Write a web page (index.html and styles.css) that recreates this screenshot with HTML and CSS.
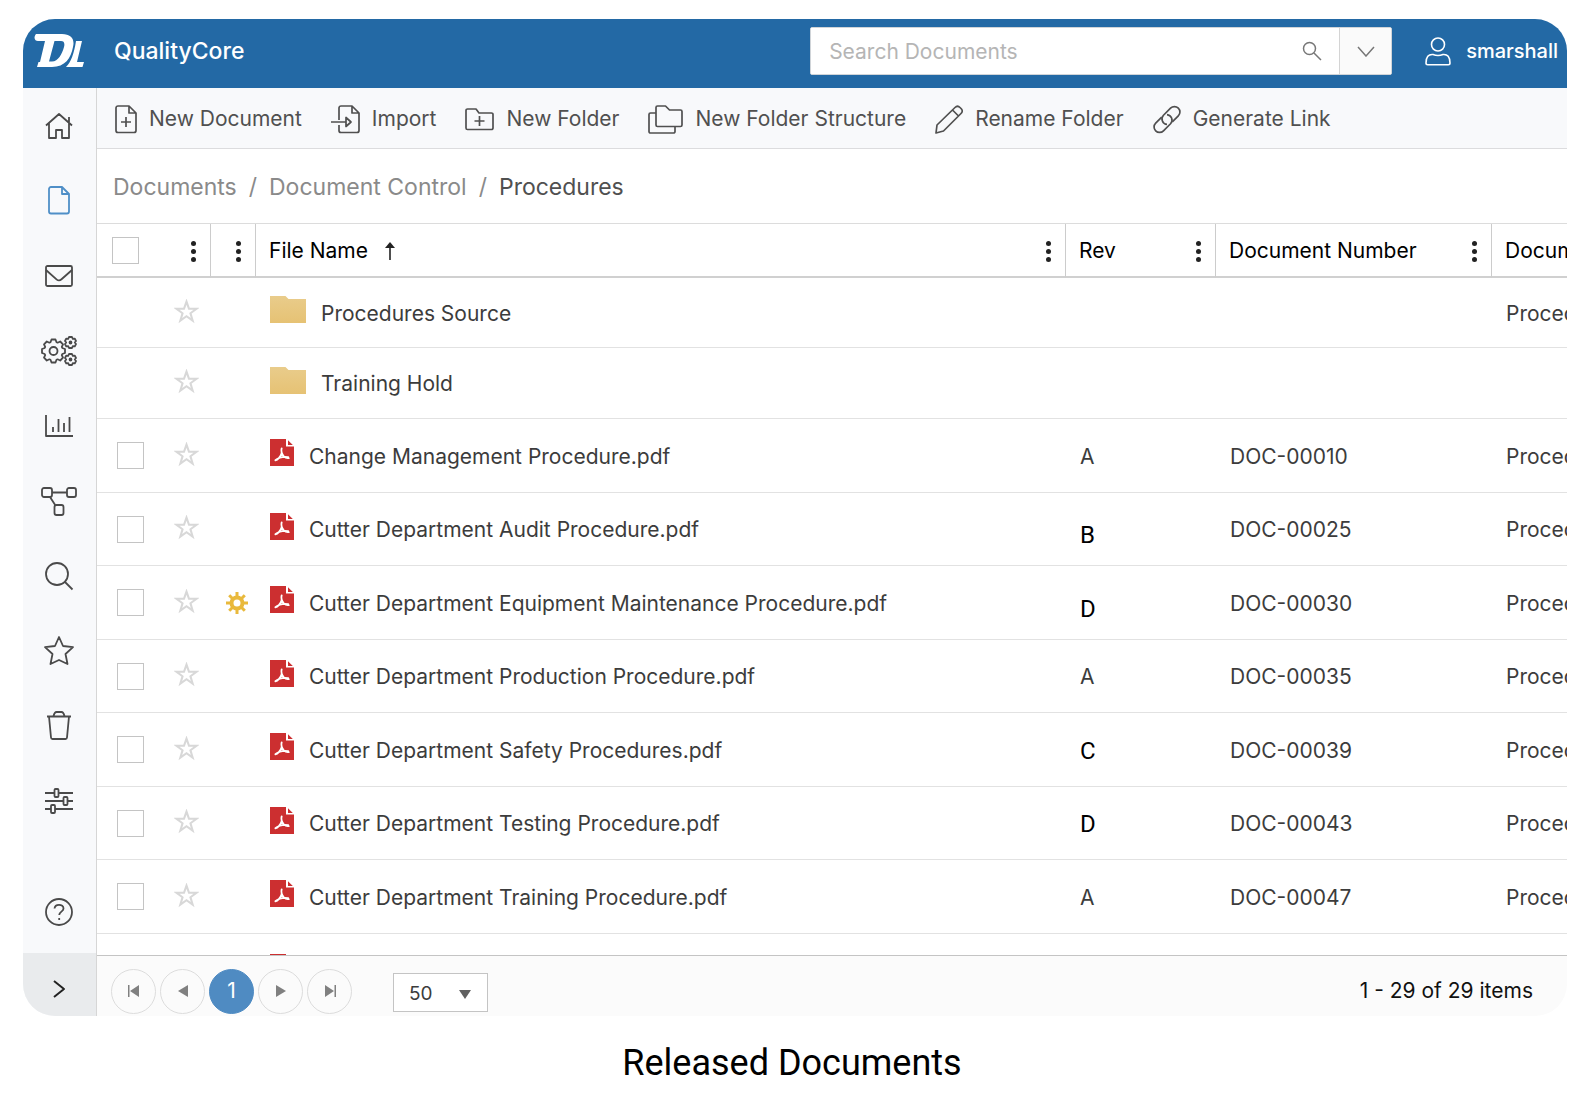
FILE: index.html
```html
<!DOCTYPE html>
<html lang="en">
<head>
    <meta charset="UTF-8">
    <meta name="viewport" content="width=device-width, initial-scale=1.0">
    <title>QualityCore</title>
    <link rel="stylesheet" href="styles.css">
</head>
<body>
    <!-- Shared symbols -->
    <svg width="0" height="0" class="sprite" aria-hidden="true">
        <defs>
            <linearGradient id="folderFill" x1="0" y1="0" x2="0" y2="1">
                <stop offset="0" stop-color="#e9cc8b"/>
                <stop offset="1" stop-color="#e6c274"/>
            </linearGradient>
        </defs>
        <symbol id="star" viewBox="0 0 24 24">
            <path d="M12 2.500l2.400 6.900h7.100l-5.700 4.300 2.100 7L12 16.500l-5.900 4.200 2.100-7L2.500 9.400h7.100z" fill="none" stroke="#d8d8d8" stroke-width="2"/>
        </symbol>
        <symbol id="folder" viewBox="0 0 36 27">
            <path d="M0 0h15.500l3 3H36v24H0z" fill="url(#folderFill)"/>
        </symbol>
        <symbol id="pdf" viewBox="0 0 24 27">
            <path d="M0 0h16v7.500h8V27H0z" fill="#cc2f30"/>
            <path d="M18 1.200v4.800h4.800z" fill="#cc2f30"/>
            <path d="M11.700 9.300c-.9 3 .3 6 2.300 8.200 1.300 1.400 3.300 1.900 4.800 1.600M5.400 21.300c2.300-.2 5.300-3.500 6.400-7.600M5.400 21.300c3.600-3 8.400-3.900 12.800-3.200" fill="none" stroke="#fff" stroke-width="1.800" stroke-linecap="round"/>
        </symbol>
    </svg>

    <main class="card">
        <header class="topbar">
            <svg class="logo" width="50" height="34" viewBox="0 0 50 34" aria-label="DL">
                <path fill="#fff" fill-rule="evenodd" d="M2 0H28C37 0 41 5 39 13C37 24 31 33 18 33H3L4.500 28H6L11 7H4C1 7-1 4 2 0zM20.500 7L15 27.500H18C24 27.500 28 20 30 13C31 9 30 7 27 7z"/>
                <path fill="#fff" d="M42 7H48L43 28H50L48.500 33H32C37 28 40 20 42 7z"/>
            </svg>
            <h1 class="product">QualityCore</h1>
            <form class="search">
                <input type="text" placeholder="Search Documents" aria-label="Search Documents">
                <button type="button" class="search-go" aria-label="Search">
                    <svg width="20" height="20" viewBox="0 0 20 20"><circle cx="7.500" cy="7.500" r="6"/><path d="M12 12l7 7"/></svg>
                </button>
                <button type="button" class="search-more" aria-label="Search options">
                    <svg width="18" height="11" viewBox="0 0 18 11"><path d="M1 1l8 9 8-9"/></svg>
                </button>
            </form>
            <a href="#" class="user">
                <svg width="26" height="29" viewBox="0 0 26 29"><circle cx="13" cy="7.500" r="6.500"/><path d="M1 26c0-6 2.500-9 7-8.500 3 1.200 7 1.200 10 0 4.500-.5 7 2.500 7 8.500 0 1-.7 1.700-1.700 1.700H2.700C1.700 27.700 1 27 1 26z"/></svg>
                <span>smarshall</span>
            </a>
        </header>

        <div class="body">
            <nav class="sidebar">
                <a href="#" aria-label="Home"><svg width="28" height="26" viewBox="0 0 28 26"><path d="M1 12.500L14 1l13 11.500M4 10.500V25h7v-8h6v8h7V10.500M24 9V4"/></svg></a>
                <a href="#" class="active" aria-label="Documents"><svg width="22" height="29" viewBox="0 0 22 29"><path d="M14 1H3a2 2 0 0 0-2 2v22.500a2 2 0 0 0 2 2h16a2 2 0 0 0 2-2V8zV8h7"/></svg></a>
                <a href="#" aria-label="Mail"><svg width="28" height="22" viewBox="0 0 28 22"><rect x="1" y="1" width="26" height="20" rx="1.500"/><path d="M1 5l10.500 9.300q2.500 2.200 5 0L27 5"/></svg></a>
                <a href="#" aria-label="Workflows"><svg width="36" height="30" viewBox="0 0 36 30">
                    <path transform="translate(12.500 15)" d="M-3-8.800L-2-11.500H2L3-8.800 4.100-8.300 6.700-9.500 9.500-6.700 8.300-4.100 8.800-3 11.500-2V2L8.800 3 8.300 4.100 9.500 6.700 6.700 9.500 4.100 8.300 3 8.800 2 11.500H-2L-3 8.800-4.100 8.300-6.700 9.500-9.500 6.700-8.300 4.100-8.800 3-11.500 2V-2L-8.800-3-8.300-4.100-9.500-6.700-6.700-9.500-4.100-8.300z"/>
                    <circle cx="12.500" cy="15" r="4"/>
                    <path d="M28 1h3l.8 1.800 2-.2L35 5l-1.200 1.500L35 8l-1.200 2.400-2-.2L31 12h-3l-.8-1.800-2 .2L24 8l1.200-1.500L24 5l1.200-2.400 2 .2z"/><circle cx="29.500" cy="6.500" r="1"/>
                    <path d="M28 18h3l.8 1.800 2-.2L35 22l-1.200 1.500L35 25l-1.200 2.400-2-.2L31 29h-3l-.8-1.800-2 .2L24 25l1.200-1.500L24 22l1.200-2.400 2 .2z"/><circle cx="29.500" cy="23.500" r="1"/>
                </svg></a>
                <a href="#" aria-label="Reports"><svg width="28" height="22" viewBox="0 0 28 22"><path d="M1 0v21h27M8 17v-5M13.500 17V4M19 17V8M24.500 17V2"/></svg></a>
                <a href="#" aria-label="Processes"><svg width="36" height="30" viewBox="0 0 36 30"><rect x="1" y="2" width="10" height="9" rx="2"/><rect x="26" y="2" width="9" height="9" rx="2"/><rect x="13.500" y="19" width="9" height="10" rx="2"/><path d="M11 6.500h15M9 11l5.500 8.500"/></svg></a>
                <a href="#" aria-label="Search"><svg width="28" height="28" viewBox="0 0 28 28"><circle cx="12" cy="12" r="11"/><path d="M19.500 19.500l8 8"/></svg></a>
                <a href="#" aria-label="Favorites"><svg width="30" height="29" viewBox="0 0 30 29"><path d="M15 1l4 9 10 1.200-7.500 6.800 2 10L15 24l-8.500 4 2-10L1 11.200 11 10z"/></svg></a>
                <a href="#" aria-label="Trash"><svg width="26" height="29" viewBox="0 0 26 29"><path d="M1 5.500h24M3 5.500l2 21q.1 1.500 1.500 1.500h13q1.400 0 1.500-1.500l2-21M7.500 5q1-4 3-4h5q2 0 3 4"/></svg></a>
                <a href="#" aria-label="Settings"><svg width="28" height="26" viewBox="0 0 28 26"><path d="M0 5h9.500M13.500 5H28M0 13h18.500M22.500 13H28M0 21h6M10 21h18"/><rect x="9.500" y="1" width="4" height="8" rx="1"/><rect x="18.500" y="9" width="4" height="8" rx="1"/><rect x="6" y="17" width="4" height="8" rx="1"/></svg></a>
                <a href="#" class="help" aria-label="Help"><svg width="28" height="28" viewBox="0 0 28 28"><circle cx="14" cy="14" r="13"/><path d="M9.500 10.500c.3-2.500 2-3.700 4.500-3.700s4.500 1.500 4.500 3.700c0 3-4.300 3.300-4.300 6.500M14.200 20v2"/></svg></a>
                <button type="button" class="expand" aria-label="Expand"><svg width="12" height="18" viewBox="0 0 12 18"><path d="M1 1l10 8L1 17"/></svg></button>
            </nav>

            <section class="content">
                <div class="toolbar">
                    <button type="button"><svg width="22" height="29" viewBox="0 0 22 29"><path d="M14 1H3a2 2 0 0 0-2 2v22.500a2 2 0 0 0 2 2h16a2 2 0 0 0 2-2V8zV8h7M11 12v10M6 17h10"/></svg>New Document</button>
                    <button type="button"><svg width="29" height="29" viewBox="0 0 29 29"><path d="M8 15V3a2 2 0 0 1 2-2h11l7 7v17.500a2 2 0 0 1-2 2H10a2 2 0 0 1-2-2V20M21 1v7h7M0 17h15M15 12.500v9l5-4.500z"/></svg>Import</button>
                    <button type="button"><svg width="29" height="29" viewBox="0 0 29 29"><path d="M3 4h8l3 4h12.500a1.500 1.500 0 0 1 1.500 1.500V23a1.500 1.500 0 0 1-1.500 1.500H2.500A1.500 1.500 0 0 1 1 23V5.500A1.500 1.500 0 0 1 2.500 4zM14.500 11v10M9.500 16h10"/></svg>New Folder</button>
                    <button type="button"><svg width="35" height="29" viewBox="0 0 35 29"><path d="M9.500 1h8l4 4H32.500A1.500 1.500 0 0 1 34 6.500v13.500a1.500 1.500 0 0 1-1.500 1.500h-23A1.500 1.500 0 0 1 8 20V2.500A1.500 1.500 0 0 1 9.500 1zM8 8H2.500A1.500 1.500 0 0 0 1 9.500v17A1.500 1.500 0 0 0 2.500 28h23a1.500 1.500 0 0 0 1.500-1.500v-5"/></svg>New Folder Structure</button>
                    <button type="button"><svg width="28" height="29" viewBox="0 0 28 29"><path d="M1 28l1-8L20 2.500q2.500-2.500 5 0l1 1q2.500 2.500 0 5L8.500 26zM17.500 5l6 6"/></svg>Rename Folder</button>
                    <button type="button"><svg width="28" height="29" viewBox="0 0 28 29"><g transform="translate(14 14.500) rotate(-45)"><path d="M2 5.500H10.500A5.500 5.500 0 0 0 10.500-5.500H.5A5.500 5.500 0 0 0-3.500 3.500"/><path d="M-2-5.500H-10.500A5.500 5.500 0 0 0-10.500 5.500H-.5A5.500 5.500 0 0 0 3.500-3.500"/></g></svg>Generate Link</button>
                </div>

                <nav class="breadcrumb" aria-label="Breadcrumb">
                    <a href="#">Documents</a><span>/</span><a href="#">Document Control</a><span>/</span><a href="#" class="current">Procedures</a>
                </nav>

                <div class="grid">
                    <table>
                        <colgroup>
                            <col class="col-select"><col class="col-flag"><col><col class="col-rev"><col class="col-number"><col class="col-type">
                        </colgroup>
                        <thead>
                            <tr>
                                <th><div class="head"><input type="checkbox" aria-label="Select all"><i class="dots"></i></div></th>
                                <th><div class="head"><i class="dots"></i></div></th>
                                <th><div class="head">File Name<svg class="sort" width="12" height="18" viewBox="0 0 12 18"><path d="M6 18V3" stroke="#222" stroke-width="1.600"/><path d="M6 0l5 6H1z" fill="#222"/></svg><i class="dots"></i></div></th>
                                <th><div class="head">Rev<i class="dots"></i></div></th>
                                <th><div class="head">Document Number<i class="dots"></i></div></th>
                                <th><div class="head">Document</div></th>
                            </tr>
                        </thead>
                        <tbody>
                            <tr class="folder-row">
                                <td><div class="select"><svg class="star"><use href="#star"/></svg></div></td>
                                <td></td>
                                <td><div class="file"><svg class="folder"><use href="#folder"/></svg>Procedures Source</div></td>
                                <td></td><td></td><td>Procedures</td>
                            </tr>
                            <tr class="folder-row">
                                <td><div class="select"><svg class="star"><use href="#star"/></svg></div></td>
                                <td></td>
                                <td><div class="file"><svg class="folder"><use href="#folder"/></svg>Training Hold</div></td>
                                <td></td><td></td><td></td>
                            </tr>
                            <tr>
                                <td><div class="select"><input type="checkbox" aria-label="Select DOC-00010"><svg class="star"><use href="#star"/></svg></div></td>
                                <td></td>
                                <td><div class="file"><svg class="pdf"><use href="#pdf"/></svg>Change Management Procedure.pdf</div></td>
                                <td>A</td><td>DOC-00010</td><td>Procedures</td>
                            </tr>
                            <tr>
                                <td><div class="select"><input type="checkbox" aria-label="Select DOC-00025"><svg class="star"><use href="#star"/></svg></div></td>
                                <td></td>
                                <td><div class="file"><svg class="pdf"><use href="#pdf"/></svg>Cutter Department Audit Procedure.pdf</div></td>
                                <td class="revised low">B</td><td>DOC-00025</td><td>Procedures</td>
                            </tr>
                            <tr>
                                <td><div class="select"><input type="checkbox" aria-label="Select DOC-00030"><svg class="star"><use href="#star"/></svg></div></td>
                                <td class="flag"><svg width="22" height="22" viewBox="0 0 22 22"><circle cx="11" cy="11" r="5.500" fill="none" stroke="#e9b93c" stroke-width="4"/><path d="M11 0v5M11 17v5M0 11h5M17 11h5M3.200 3.200l3.500 3.500M15.300 15.300l3.500 3.500M18.800 3.200l-3.500 3.500M6.700 15.300l-3.500 3.500" stroke="#e9b93c" stroke-width="3"/></svg></td>
                                <td><div class="file"><svg class="pdf"><use href="#pdf"/></svg>Cutter Department Equipment Maintenance Procedure.pdf</div></td>
                                <td class="revised low">D</td><td>DOC-00030</td><td>Procedures</td>
                            </tr>
                            <tr>
                                <td><div class="select"><input type="checkbox" aria-label="Select DOC-00035"><svg class="star"><use href="#star"/></svg></div></td>
                                <td></td>
                                <td><div class="file"><svg class="pdf"><use href="#pdf"/></svg>Cutter Department Production Procedure.pdf</div></td>
                                <td>A</td><td>DOC-00035</td><td>Procedures</td>
                            </tr>
                            <tr>
                                <td><div class="select"><input type="checkbox" aria-label="Select DOC-00039"><svg class="star"><use href="#star"/></svg></div></td>
                                <td></td>
                                <td><div class="file"><svg class="pdf"><use href="#pdf"/></svg>Cutter Department Safety Procedures.pdf</div></td>
                                <td class="revised">C</td><td>DOC-00039</td><td>Procedures</td>
                            </tr>
                            <tr>
                                <td><div class="select"><input type="checkbox" aria-label="Select DOC-00043"><svg class="star"><use href="#star"/></svg></div></td>
                                <td></td>
                                <td><div class="file"><svg class="pdf"><use href="#pdf"/></svg>Cutter Department Testing Procedure.pdf</div></td>
                                <td class="revised">D</td><td>DOC-00043</td><td>Procedures</td>
                            </tr>
                            <tr>
                                <td><div class="select"><input type="checkbox" aria-label="Select DOC-00047"><svg class="star"><use href="#star"/></svg></div></td>
                                <td></td>
                                <td><div class="file"><svg class="pdf"><use href="#pdf"/></svg>Cutter Department Training Procedure.pdf</div></td>
                                <td>A</td><td>DOC-00047</td><td>Procedures</td>
                            </tr>
                            <tr>
                                <td></td><td></td>
                                <td><div class="file"><svg class="pdf"><use href="#pdf"/></svg></div></td>
                                <td></td><td></td><td></td>
                            </tr>
                        </tbody>
                    </table>
                </div>

                <footer class="pager">
                    <button type="button" aria-label="First page"><svg width="12" height="12" viewBox="0 0 12 12"><path d="M0 0h1.500v12H0zM11 0v12L2 6z"/></svg></button>
                    <button type="button" aria-label="Previous page"><svg width="12" height="12" viewBox="0 0 12 12"><path d="M11 0v12L1 6z"/></svg></button>
                    <button type="button" class="page">1</button>
                    <button type="button" aria-label="Next page"><svg width="12" height="12" viewBox="0 0 12 12"><path d="M1 0v12l10-6z"/></svg></button>
                    <button type="button" aria-label="Last page"><svg width="12" height="12" viewBox="0 0 12 12"><path d="M10.500 0H12v12h-1.500zM1 0v12l9-6z"/></svg></button>
                    <div class="page-size">
                        <select aria-label="Items per page"><option>50</option></select>
                    </div>
                    <span class="count">1 - 29 of 29 items</span>
                </footer>
            </section>
        </div>
    </main>

    <p class="caption">Released Documents</p>
</body>
</html>
```

FILE: styles.css
```css
* {
    box-sizing: border-box;
}

body {
    font-family: Inter, "Liberation Sans", sans-serif;
    font-size: 21px;
    line-height: 28px;
    margin: 0;
    padding: 19px 22px 0 23px;
    height: 100vh;
    display: flex;
    flex-direction: column;
    background-color: #fff;
    color: #3c3c3c;
}

a {
    color: inherit;
    text-decoration: none;
}

button,
input,
select {
    font: inherit;
    color: inherit;
}

button {
    background: none;
    border: none;
    padding: 0;
    cursor: pointer;
}

svg {
    flex: none;
    display: block;
}

.sprite {
    position: absolute;
}

.card {
    flex: 1;
    min-height: 0;
    display: flex;
    flex-direction: column;
    border-radius: 32px;
    overflow: hidden;
}

/* Top bar */
.topbar {
    height: 69px;
    flex: none;
    display: flex;
    align-items: center;
    padding: 0 9px 5px 11px;
    background-color: #2369a5;
    color: #fff;
}

.product {
    font-size: 23px;
    font-weight: 500;
    margin: 0 auto 0 30px;
}

.search {
    display: flex;
    width: 582px;
    height: 48px;
    background-color: #fff;
    border: 1px solid #d0d4d8;
    border-radius: 2px;
    overflow: hidden;
}

.search input {
    flex: 1;
    min-width: 0;
    border: none;
    outline: none;
    padding: 2px 18px 0;
}

.search input::placeholder {
    color: #b5b5b5;
    opacity: 1;
}

.search svg {
    fill: none;
    stroke: #777;
    stroke-width: 1.5;
}

.search-go {
    width: 37px;
}

.search-more {
    width: 52px;
    display: flex;
    align-items: center;
    justify-content: center;
    border-left: 1px solid #d4d4d4;
    background-color: #fafafa;
}

.user {
    display: flex;
    align-items: center;
    gap: 15px;
    margin-left: 33px;
    font-size: 20px;
    font-weight: 500;
}

.user svg {
    fill: none;
    stroke: #fff;
    stroke-width: 1.6;
}

.body {
    flex: 1;
    min-height: 0;
    display: flex;
}

/* Sidebar */
.sidebar {
    width: 74px;
    flex: none;
    display: flex;
    flex-direction: column;
    background-color: #f8f9fb;
    border-right: 1px solid #d6d6d6;
}

.sidebar a,
.expand {
    height: 75px;
    flex: none;
    display: flex;
    align-items: center;
    justify-content: center;
    padding-right: 2px;
}

.sidebar svg {
    fill: none;
    stroke: #4a4a4a;
    stroke-width: 1.8;
    stroke-linejoin: round;
    overflow: visible;
}

.sidebar .active svg {
    stroke: #4f8fc7;
}

.sidebar .help {
    margin-top: auto;
    margin-bottom: 4px;
}

.expand {
    height: 63px;
    padding-top: 8px;
    background-color: #e9ebed;
}

.sidebar .expand svg {
    stroke: #222;
    stroke-width: 2;
}

.content {
    flex: 1;
    min-width: 0;
    display: flex;
    flex-direction: column;
}

/* Toolbar */
.toolbar {
    height: 61px;
    flex: none;
    display: flex;
    align-items: center;
    gap: 29px;
    padding: 2px 18px 0;
    background-color: #f8f9fb;
    border-bottom: 1px solid #dcdcde;
    color: #505050;
}

.toolbar button {
    display: flex;
    align-items: center;
    gap: 12px;
    white-space: nowrap;
}

.toolbar svg {
    fill: none;
    stroke: #505050;
    stroke-width: 1.7;
    stroke-linejoin: round;
}

.breadcrumb {
    height: 75px;
    flex: none;
    display: flex;
    align-items: center;
    gap: 12px;
    padding: 2px 16px 0;
    border-bottom: 1px solid #dcdcdc;
    font-size: 23px;
    color: #8a8a8a;
}

.breadcrumb .current {
    color: #505050;
}

/* Document grid */
.grid {
    flex: 1;
    min-height: 0;
    overflow: hidden;
}

table {
    width: 100%;
    table-layout: fixed;
    border-collapse: separate;
    border-spacing: 0;
}

.col-select {
    width: 114px;
}

.col-flag {
    width: 45px;
}

.col-rev {
    width: 150px;
}

.col-number {
    width: 276px;
}

.col-type {
    width: 75px;
}

th,
td {
    padding: 2px 0 0 14px;
    text-align: left;
    white-space: nowrap;
    overflow: hidden;
    border-bottom: 1px solid #e2e2e2;
}

th {
    height: 54px;
    padding: 2px 12px 0 13px;
    font-weight: 400;
    color: #000;
    border-right: 1px solid #ccc;
    border-bottom: 2px solid #d0d0d0;
}

th:first-child {
    padding-left: 15px;
}

th:last-child {
    padding-right: 0;
    border-right: none;
}

td {
    height: 74px;
}

tr:nth-child(even) td {
    height: 73px;
}

.folder-row td {
    height: 70px;
}

.folder-row:nth-child(even) td {
    height: 71px;
}

.head {
    display: flex;
    align-items: center;
}

.sort {
    margin-left: 16px;
}

.dots,
.dots::before,
.dots::after {
    content: "";
    display: block;
    width: 5px;
    height: 5px;
    border-radius: 50%;
    background-color: #222;
}

.dots {
    margin: 8px 2px 8px auto;
}

.dots::before {
    transform: translateY(-8px);
}

.dots::after {
    margin-top: -5px;
    transform: translateY(8px);
}

input[type="checkbox"] {
    appearance: none;
    width: 27px;
    height: 27px;
    margin: 0 0 2px;
    border: 1px solid #c4c4c4;
    background-color: #fff;
}

.select {
    display: flex;
    align-items: center;
    justify-content: flex-end;
    gap: 30px;
    padding-right: 12px;
}

.star {
    width: 25px;
    height: 25px;
    margin-bottom: 5px;
}

.folder {
    width: 36px;
    height: 27px;
    margin-bottom: 8px;
}

.flag {
    padding: 0 0 0 15px;
}

.file {
    display: flex;
    align-items: center;
    gap: 15px;
}

.pdf {
    width: 24px;
    height: 27px;
    margin-bottom: 8px;
}

.revised {
    font-family: Roboto, sans-serif;
    font-size: 24px;
    color: #000;
}

.low {
    padding-top: 12px;
}

/* Pager */
.pager {
    height: 61px;
    flex: none;
    display: flex;
    align-items: center;
    gap: 4px;
    padding: 10px 34px 0 14px;
    background-color: #fbfbfb;
    border-top: 1px solid #c4c4c4;
}

.pager button {
    width: 45px;
    height: 45px;
    display: flex;
    align-items: center;
    justify-content: center;
    border: 1px solid #dcdcdc;
    border-radius: 50%;
}

.pager svg {
    fill: #808080;
}

.pager .page {
    background-color: #4f8bc2;
    border-color: #4f8bc2;
    color: #fff;
}

.page-size {
    position: relative;
    margin: 2px 0 0 37px;
}

.page-size::after {
    content: "";
    position: absolute;
    right: 17px;
    top: 17px;
    border: 6px solid transparent;
    border-top: 9px solid #606060;
    border-bottom: none;
    pointer-events: none;
}

.page-size select {
    appearance: none;
    display: block;
    width: 95px;
    height: 39px;
    padding: 4px 15px 0;
    border: 1px solid #c4c4c4;
    border-radius: 0;
    background-color: #fff;
    font-size: 19px;
}

.count {
    margin-left: auto;
    color: #111;
}

.caption {
    height: 84px;
    flex: none;
    margin: 0;
    padding: 25px 6px 0 0;
    text-align: center;
    font-family: Roboto, sans-serif;
    font-size: 36px;
    line-height: 44px;
    color: #000;
}
```
